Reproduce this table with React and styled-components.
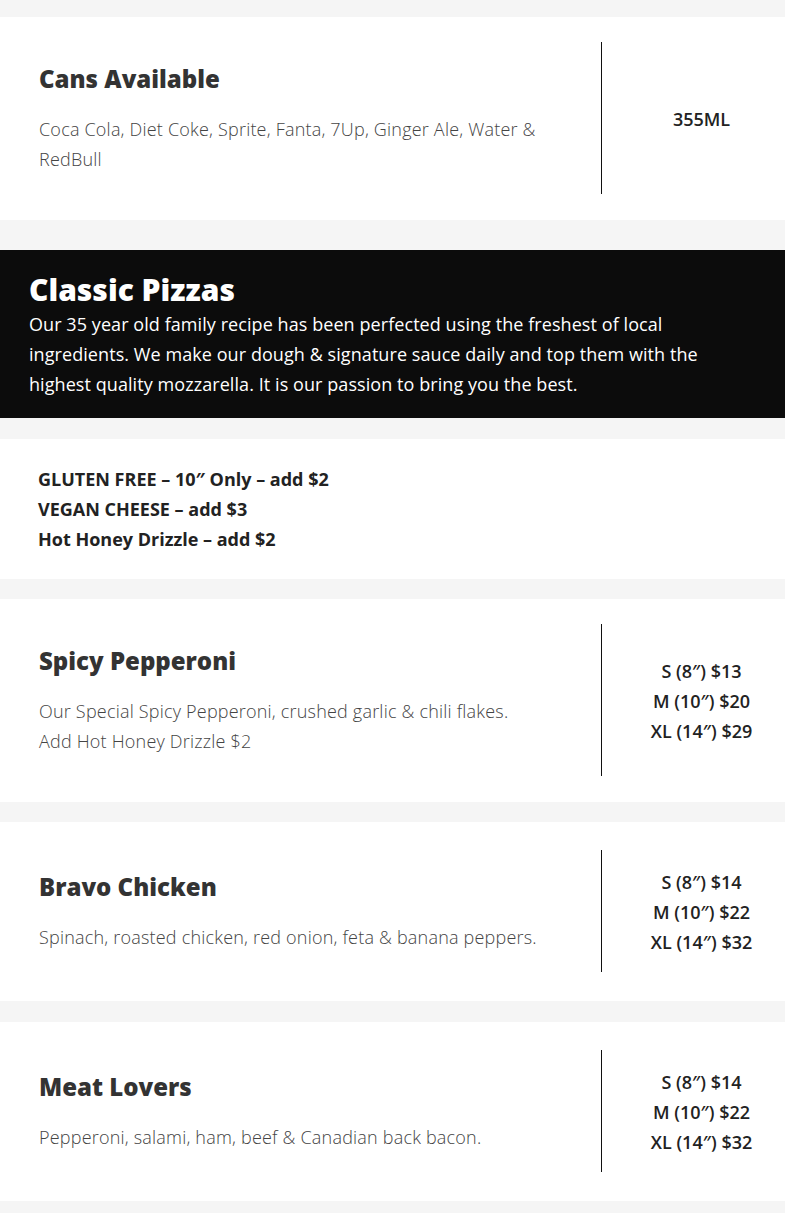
import React from "react";
import styled, { createGlobalStyle } from "styled-components";

const GlobalStyle = createGlobalStyle`
  body {
    margin: 0;
    background: #f5f5f5;
    font-family: "Open Sans", "Liberation Sans", sans-serif;
  }
`;

const Page = styled.div`
  display: flex;
  flex-direction: column;
  padding: 17px 0 12px;
`;

const Card = styled.section`
  box-sizing: border-box;
  display: flex;
  align-items: center;
  min-height: 179px;
  margin-top: ${(p) => p.$gap || 0}px;
  padding: 25px 0 26px;
  background: #fff;
`;

const Row = styled.div`
  display: flex;
  align-items: stretch;
  width: 100%;
`;

const Info = styled.div`
  box-sizing: border-box;
  flex: 0 0 601px;
  padding: 20px 39px;
`;

const ItemTitle = styled.h3`
  margin: 0 0 18px;
  font-size: 24px;
  line-height: 34px;
  font-weight: 800;
  color: #333;
`;

const ItemDesc = styled.p`
  margin: 0;
  font-size: 18px;
  line-height: 30px;
  font-weight: 300;
  letter-spacing: 0.2px;
  color: #444;
`;

const Prices = styled.div`
  flex: 1;
  display: flex;
  flex-direction: column;
  justify-content: center;
  align-items: center;
  padding: 2px 0 0 16px;
  border-left: 1px solid #111;
`;

const Price = styled.div`
  font-size: 18px;
  line-height: 30px;
  font-weight: 600;
  color: #222;
`;

const Banner = styled.header`
  margin-top: 30px;
  padding: 21px 29px 19px;
  background: #0c0c0c;
  color: #fff;
`;

const BannerTitle = styled.h2`
  margin: 0;
  font-size: 30px;
  line-height: 38px;
  font-weight: 800;
`;

const BannerText = styled.p`
  margin: 0;
  font-size: 18px;
  line-height: 30px;
  font-weight: 400;
  letter-spacing: 0.07px;
`;

const NoteCard = styled.section`
  margin-top: 21px;
  padding: 25px 38px;
  background: #fff;
`;

const Note = styled.div`
  font-size: 18px;
  line-height: 30px;
  font-weight: 700;
  color: #222;
`;

const pizzas = [
  {
    name: "Spicy Pepperoni",
    desc: ["Our Special Spicy Pepperoni, crushed garlic & chili flakes.", "Add Hot Honey Drizzle $2"],
    prices: ["S (8″) $13", "M (10″) $20", "XL (14″) $29"],
    gap: 20,
  },
  {
    name: "Bravo Chicken",
    desc: ["Spinach, roasted chicken, red onion, feta & banana peppers."],
    prices: ["S (8″) $14", "M (10″) $22", "XL (14″) $32"],
    gap: 20,
  },
  {
    name: "Meat Lovers",
    desc: ["Pepperoni, salami, ham, beef & Canadian back bacon."],
    prices: ["S (8″) $14", "M (10″) $22", "XL (14″) $32"],
    gap: 21,
  },
];

const MenuItem = ({ name, desc, prices, gap }) => (
  <Card $gap={gap}>
    <Row>
      <Info>
        <ItemTitle>{name}</ItemTitle>
        <ItemDesc>
          {desc.map((line, i) => (
            <React.Fragment key={i}>
              {i > 0 && <br />}
              {line}
            </React.Fragment>
          ))}
        </ItemDesc>
      </Info>
      <Prices>
        {prices.map((p) => (
          <Price key={p}>{p}</Price>
        ))}
      </Prices>
    </Row>
  </Card>
);

const App = () => (
  <>
    <GlobalStyle />
    <Page>
      <MenuItem
        name="Cans Available"
        desc={["Coca Cola, Diet Coke, Sprite, Fanta, 7Up, Ginger Ale, Water & RedBull"]}
        prices={["355ML"]}
      />
      <Banner>
        <BannerTitle>Classic Pizzas</BannerTitle>
        <BannerText>
          Our 35 year old family recipe has been perfected using the freshest of local
          ingredients. We make our dough &amp; signature sauce daily and top them with the
          highest quality mozzarella. It is our passion to bring you the best.
        </BannerText>
      </Banner>
      <NoteCard>
        <Note>GLUTEN FREE – 10″ Only – add $2</Note>
        <Note>VEGAN CHEESE – add $3</Note>
        <Note>Hot Honey Drizzle – add $2</Note>
      </NoteCard>
      {pizzas.map((p) => (
        <MenuItem key={p.name} {...p} />
      ))}
    </Page>
  </>
);

export default App;
